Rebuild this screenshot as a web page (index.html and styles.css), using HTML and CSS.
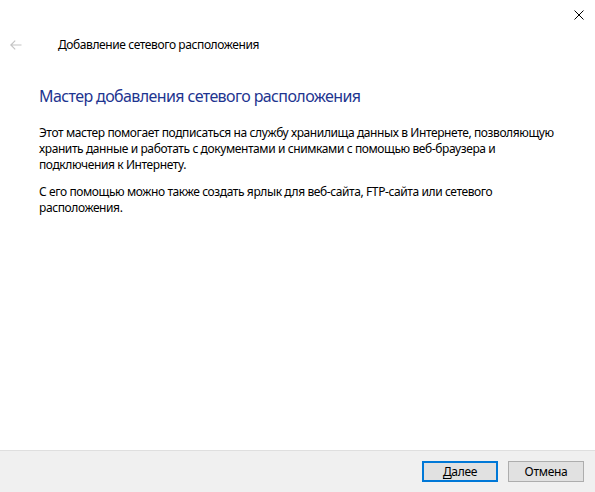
FILE: index.html
```html
<!DOCTYPE html>
<html lang="ru">
<head>
  <meta charset="UTF-8">
  <title>Добавление сетевого расположения</title>
  <link rel="stylesheet" href="styles.css">
</head>
<body>

<div class="wizard">
  <div class="titlebar">
    <button class="close" title="Закрыть">
      <svg width="10" height="10" viewBox="0 0 10 10">
        <path d="M0.5 0.5 L9.5 9.5 M9.5 0.5 L0.5 9.5" stroke="#000" stroke-width="1"/>
      </svg>
    </button>
  </div>

  <div class="nav">
    <span class="back">
      <svg width="12" height="10" viewBox="0 0 12 10">
        <path d="M0.8 5 H11.5 M5.2 0.6 L0.8 5 L5.2 9.4" stroke="#c4c4c4" stroke-width="1.2" fill="none"/>
      </svg>
    </span>
    <span class="nav-title">Добавление сетевого расположения</span>
  </div>

  <div class="content">
    <h1 class="heading">Мастер добавления сетевого расположения</h1>
    <p>Этот мастер помогает подписаться на службу хранилища данных в Интернете, позволяющую хранить данные и работать с документами и снимками с помощью веб-браузера и подключения к Интернету.</p>
    <p>С его помощью можно также создать ярлык для веб-сайта, FTP-сайта или сетевого расположения.</p>
  </div>

  <div class="footer">
    <button class="btn btn-default"><u>Д</u>алее</button>
    <button class="btn">Отмена</button>
  </div>
</div>

</body>
</html>
```

FILE: styles.css
```css
html, body {
  margin: 0;
  height: 100%;
}
body {
  font-family: "Noto Sans", "Open Sans", sans-serif;
  font-size: 12px;
  letter-spacing: -0.4px;
  color: #000;
  background-color: white;
}
.wizard {
  display: flex;
  flex-direction: column;
  height: 100%;
}
.titlebar {
  height: 30px;
  display: flex;
  justify-content: flex-end;
}
.close {
  width: 32px;
  height: 30px;
  border: none;
  background: none;
  padding: 0;
  display: flex;
  align-items: center;
  justify-content: center;
}
.nav {
  display: flex;
  align-items: center;
  height: 30px;
  padding-left: 10px;
}
.back {
  display: flex;
  width: 48px;
}
.nav-title {
  line-height: 16px;
}
.content {
  flex: 1;
  padding: 25px 30px 0 39px;
}
.heading {
  margin: 0 0 18px;
  font-size: 16px;
  font-weight: normal;
  letter-spacing: -0.6px;
  color: #1e3590;
  line-height: 22px;
}
.content p {
  margin: 0 0 11px;
  line-height: 16px;
}
.footer {
  box-sizing: border-box;
  height: 42px;
  border-top: 1px solid #dfdfdf;
  background-color: #f0f0f0;
  display: flex;
  justify-content: flex-end;
  align-items: flex-start;
  gap: 10px;
  padding: 10px 11px 0 0;
}
.btn {
  font-family: inherit;
  font-size: 12px;
  letter-spacing: -0.3px;
  width: 76px;
  height: 21px;
  padding: 0;
  border: 1px solid #adadad;
  background-color: #e1e1e1;
  color: #000;
}
.btn-default {
  border: 2px solid #0078d7;
}
.btn u {
  text-underline-offset: 2px;
}
```
